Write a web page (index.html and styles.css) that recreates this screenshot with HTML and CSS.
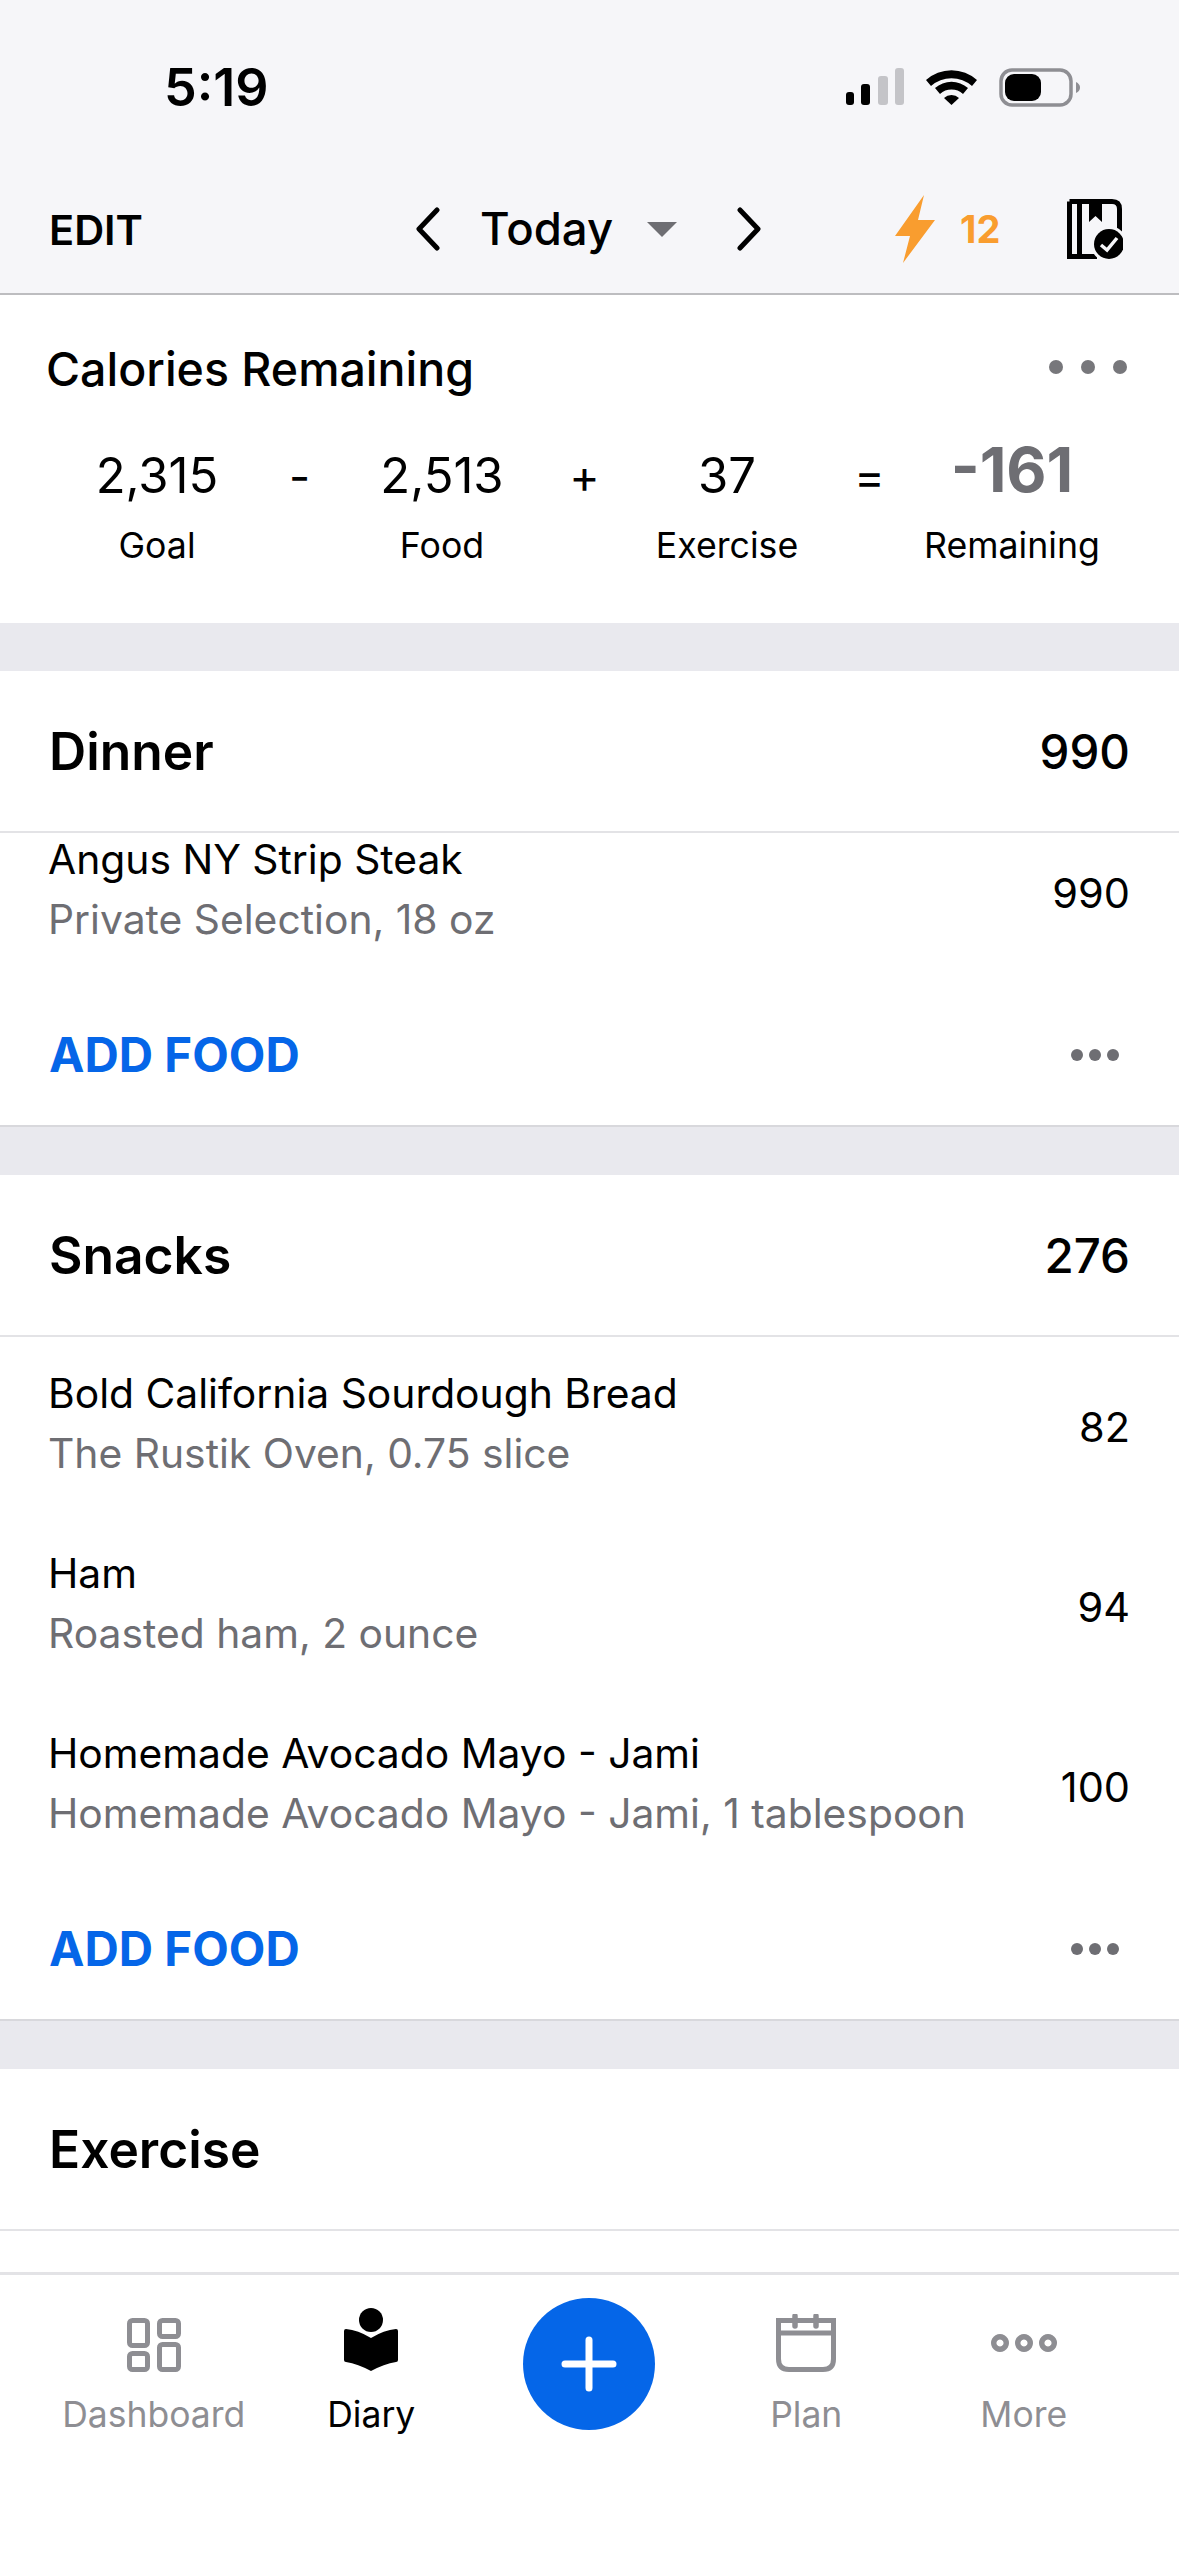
FILE: index.html
```html
<!DOCTYPE html>
<html lang="en">
<head>
    <meta charset="UTF-8">
    <meta name="viewport" content="width=device-width, initial-scale=1.0">
    <title>Diary</title>
    <link rel="stylesheet" href="styles.css">
</head>
<body>
    <div class="app">
        <header class="top">
            <div class="status-bar">
                <span class="time">5:19</span>
                <div class="status-icons">
                    <svg class="signal" width="58" height="37" viewBox="0 0 58 37">
                        <rect x="0" y="24" width="8" height="13" rx="3" fill="#000"/>
                        <rect x="15" y="16" width="9" height="21" rx="3" fill="#000"/>
                        <rect x="32" y="8" width="10" height="29" rx="3" fill="#c4c4c8"/>
                        <rect x="49" y="0" width="9" height="37" rx="3" fill="#c4c4c8"/>
                    </svg>
                    <svg class="wifi" width="51" height="37" viewBox="0 0 51 37">
                        <path d="M0 12 A38 38 0 0 1 51 12 L46 18 A31 31 0 0 0 5 18 Z"/>
                        <path d="M9 22 A25 25 0 0 1 42 22 L37 28 A17 17 0 0 0 14 28 Z" transform="translate(0 -2)"/>
                        <path d="M18 30 A11 11 0 0 1 33 30 L25.5 37 Z"/>
                    </svg>
                    <svg class="battery" width="82" height="39" viewBox="0 0 82 39">
                        <rect x="2" y="2" width="70" height="35" rx="11" fill="none" stroke="#8e8e93" stroke-width="3.5"/>
                        <rect x="6" y="6" width="36" height="27" rx="9" fill="#000"/>
                        <path d="M77 14 Q81 16 81 19.5 Q81 23 77 25 Z" fill="#8e8e93"/>
                    </svg>
                </div>
            </div>
            <nav class="nav-bar">
                <span class="edit">EDIT</span>
                <div class="date-nav">
                    <svg class="chevron" width="26" height="44" viewBox="0 0 26 44"><path d="M21 3 L3 22 L21 41"/></svg>
                    <span class="today">Today</span>
                    <span class="caret"></span>
                    <svg class="chevron" width="26" height="44" viewBox="0 0 26 44"><path d="M3 3 L21 22 L3 41"/></svg>
                </div>
                <div class="nav-right">
                    <svg class="bolt" width="40" height="68" viewBox="0 0 40 68"><path d="M29 0 L0 41 L15 41 L8 68 L40 25 L23 25 Z"/></svg>
                    <span class="streak">12</span>
                    <svg class="plan-icon" width="56" height="60" viewBox="0 0 56 60">
                        <path d="M2.5 2.5 H45 Q52.5 2.5 52.5 10 V36 M2.5 2.5 V57.5 H30" fill="none" stroke="#000" stroke-width="5"/>
                        <rect x="10" y="2" width="5" height="56"/>
                        <path d="M22 2 H35 V23 L28.5 17 L22 23 Z"/>
                        <circle cx="42" cy="45" r="18" fill="#f6f6f9"/>
                        <circle cx="42" cy="45" r="15"/>
                        <path d="M34 46 L40 51 L50 39" fill="none" stroke="#f6f6f9" stroke-width="3.5"/>
                    </svg>
                </div>
            </nav>
        </header>

        <main class="scroll">
            <section class="summary">
                <div class="summary-head">
                    <h2>Calories Remaining</h2>
                    <div class="dots dots-lg"><i></i><i></i><i></i></div>
                </div>
                <div class="sum-grid">
                    <div class="sum-cell"><b>2,315</b><span>Goal</span></div>
                    <div class="sum-op">-</div>
                    <div class="sum-cell"><b>2,513</b><span>Food</span></div>
                    <div class="sum-op">+</div>
                    <div class="sum-cell"><b>37</b><span>Exercise</span></div>
                    <div class="sum-op">=</div>
                    <div class="sum-cell sum-total"><b>-161</b><span>Remaining</span></div>
                </div>
            </section>

            <section class="meal">
                <div class="meal-head"><h3>Dinner</h3><span class="meal-cal">990</span></div>
                <div class="food food-scrolled">
                    <div class="food-text"><p class="food-name">Angus NY Strip Steak</p><p class="food-sub">Private Selection, 18 oz</p></div>
                    <span class="food-cal">990</span>
                </div>
                <div class="meal-foot"><span class="add-food">ADD FOOD</span><div class="dots"><i></i><i></i><i></i></div></div>
            </section>

            <section class="meal">
                <div class="meal-head"><h3>Snacks</h3><span class="meal-cal">276</span></div>
                <div class="food">
                    <div class="food-text"><p class="food-name">Bold California Sourdough Bread</p><p class="food-sub">The Rustik Oven, 0.75 slice</p></div>
                    <span class="food-cal">82</span>
                </div>
                <div class="food">
                    <div class="food-text"><p class="food-name">Ham</p><p class="food-sub">Roasted ham, 2 ounce</p></div>
                    <span class="food-cal">94</span>
                </div>
                <div class="food">
                    <div class="food-text"><p class="food-name">Homemade Avocado Mayo - Jami</p><p class="food-sub">Homemade Avocado Mayo - Jami, 1 tablespoon</p></div>
                    <span class="food-cal">100</span>
                </div>
                <div class="meal-foot"><span class="add-food">ADD FOOD</span><div class="dots"><i></i><i></i><i></i></div></div>
            </section>

            <section class="meal">
                <div class="meal-head"><h3>Exercise</h3></div>
                <div class="food food-clipped">
                    <p class="food-name">Running on treadmill</p>
                </div>
            </section>
        </main>

        <footer class="tabs">
            <div class="tab">
                <svg width="54" height="54" viewBox="0 0 54 54" fill="none" stroke="#8e8e93" stroke-width="5">
                    <rect x="2.5" y="2.5" width="18" height="25" rx="3"/>
                    <rect x="2.5" y="35.5" width="18" height="16" rx="3"/>
                    <rect x="32.5" y="2.5" width="19" height="16" rx="3"/>
                    <rect x="32.5" y="26.5" width="19" height="25" rx="3"/>
                </svg>
                <span>Dashboard</span>
            </div>
            <div class="tab tab-active">
                <svg width="54" height="64" viewBox="0 0 54 64">
                    <circle cx="27" cy="12" r="12"/>
                    <path d="M2 21 Q14 22 27 30 Q40 22 52 21 Q54 21 54 23 V52 Q54 54 52 54 Q40 56 27 63 Q14 56 2 54 Q0 54 0 52 V23 Q0 21 2 21 Z"/>
                </svg>
                <span>Diary</span>
            </div>
            <div class="tab tab-add">
                <div class="add-btn">
                    <svg width="56" height="56" viewBox="0 0 56 56" stroke="#fff" stroke-width="7" stroke-linecap="round"><path d="M28 4 V52 M4 28 H52"/></svg>
                </div>
            </div>
            <div class="tab">
                <svg width="60" height="58" viewBox="0 0 60 58" fill="none" stroke="#8e8e93" stroke-width="5">
                    <path d="M2.5 6.5 H57.5 V45 Q57.5 55.5 47 55.5 H13 Q2.5 55.5 2.5 45 Z"/>
                    <path d="M2.5 19 H57.5"/>
                    <path d="M19 2 V12 M40 2 V12" stroke-width="5.5" stroke-linecap="round"/>
                </svg>
                <span>Plan</span>
            </div>
            <div class="tab">
                <svg class="more-icon" width="66" height="58" viewBox="0 0 66 58">
                    <path fill-rule="evenodd" d="M9 20 a9 9 0 1 0 .01 0 Z M9 25.5 a3.5 3.5 0 1 1 -.01 0 Z M33 20 a9 9 0 1 0 .01 0 Z M33 25.5 a3.5 3.5 0 1 1 -.01 0 Z M57 20 a9 9 0 1 0 .01 0 Z M57 25.5 a3.5 3.5 0 1 1 -.01 0 Z"/>
                </svg>
                <span>More</span>
            </div>
        </footer>
    </div>
</body>
</html>
```

FILE: styles.css
```css
* {
    box-sizing: border-box;
}
html, body {
    margin: 0;
    height: 100%;
    background-color: #fff;
}
body {
    font-family: Inter, "Noto Sans", sans-serif;
    color: #000;
}
h2, h3, p {
    margin: 0;
    font-weight: normal;
}
.app {
    display: flex;
    flex-direction: column;
    height: 2556px;
    overflow: hidden;
}

/* top */
.top {
    height: 295px;
    flex: none;
    background-color: #f6f6f9;
    border-bottom: 2px solid #bdbdc0;
}
.status-bar {
    height: 174px;
    display: flex;
    justify-content: space-between;
    padding: 56px 98px 0 164px;
}
.time {
    font-size: 52px;
    font-weight: 600;
    line-height: 64px;
}
.status-icons {
    display: flex;
    align-items: flex-start;
    gap: 22px;
    padding-top: 12px;
}
.nav-bar {
    display: flex;
    align-items: center;
    height: 110px;
    padding: 0 56px 0 49px;
}
.edit {
    width: 367px;
    font-size: 41.5px;
    font-weight: 600;
    margin-top: 2px;
}
.date-nav {
    display: flex;
    align-items: center;
    width: 348px;
}
.chevron {
    flex: none;
    fill: none;
    stroke: #000;
    stroke-width: 5;
    stroke-linecap: round;
    stroke-linejoin: round;
}
.today {
    font-size: 45.5px;
    font-weight: 500;
    margin: -2px 0 0 38px;
}
.caret {
    width: 0;
    height: 0;
    margin: 0 60px 0 34px;
    border-left: 15px solid transparent;
    border-right: 15px solid transparent;
    border-top: 15px solid #6e6e73;
}
.nav-right {
    display: flex;
    align-items: center;
    flex: 1;
    padding-left: 131px;
}
.bolt {
    fill: #f99d2f;
    flex: none;
}
.streak {
    color: #f99d2f;
    font-size: 38px;
    font-weight: 700;
    margin-left: 25px;
    width: 107px;
}
.plan-icon {
    flex: none;
}

/* scroll area */
.scroll {
    flex: 1;
    min-height: 0;
    overflow: hidden;
    background-color: #e9e9ee;
}
.summary {
    height: 328px;
    background-color: #fff;
    padding: 44px 46px 0;
}
.summary-head {
    display: flex;
    justify-content: space-between;
    align-items: center;
    height: 60px;
}
.summary-head h2 {
    font-size: 46.5px;
    font-weight: 500;
}
.dots {
    display: flex;
    gap: 6px;
    margin-right: 11px;
    margin-top: 2px;
}
.dots i {
    width: 12px;
    height: 12px;
    border-radius: 50%;
    background-color: #6e6e73;
}
.dots-lg {
    gap: 18px;
    margin-right: 6px;
    margin-top: -5px;
}
.dots-lg i {
    width: 14px;
    height: 14px;
    background-color: #77777b;
}
.sum-grid {
    display: grid;
    grid-template-columns: repeat(3, 190px 95px) 190px;
    margin: 49px 0 0 16px;
}
.sum-cell {
    display: flex;
    flex-direction: column;
    align-items: center;
}
.sum-cell b {
    font-size: 49px;
    font-weight: 400;
    line-height: 56px;
    height: 56px;
}
.sum-cell span {
    font-size: 35.7px;
    line-height: 46px;
    margin-top: 18px;
}
.sum-total b {
    color: #6e6e73;
    font-size: 62px;
    font-weight: 700;
    margin-top: -6px;
    margin-bottom: 6px;
}
.sum-op {
    font-size: 46px;
    line-height: 56px;
    text-align: center;
}

/* meals */
.meal {
    background-color: #fff;
    margin-top: 48px;
    border-bottom: 2px solid #d8d8dc;
}
.meal-head {
    position: relative;
    display: flex;
    justify-content: space-between;
    align-items: center;
    height: 162px;
    padding: 0 49px;
    background-color: #fff;
    border-bottom: 2px solid #e3e3e6;
}
.meal-head h3 {
    font-size: 51.5px;
    font-weight: 600;
}
.meal-cal {
    font-size: 47.5px;
    font-weight: 500;
}
.food {
    display: flex;
    justify-content: space-between;
    align-items: center;
    height: 180px;
    padding: 0 49px 0 48px;
}
.food-scrolled {
    margin-top: -30px;
}
.food-clipped {
    align-items: flex-start;
    padding-top: 27px;
}
.food-text {
    padding-bottom: 8px;
}
.food-name {
    font-size: 40.8px;
    line-height: 60px;
}
.food-sub {
    font-size: 40.8px;
    line-height: 60px;
    color: #6e6e73;
}
.food-cal {
    font-size: 41.5px;
}
.meal-foot {
    display: flex;
    justify-content: space-between;
    align-items: center;
    height: 142px;
    padding: 0 49px;
}
.add-food {
    color: #0566e8;
    font-size: 47.5px;
    font-weight: 700;
}

/* tabs */
.tabs {
    position: relative;
    flex: none;
    height: 284px;
    display: grid;
    grid-template-columns: repeat(5, 217.5px);
    padding: 0 0 0 45px;
    background-color: #fff;
    border-top: 3px solid #e3e3e6;
}
.tab {
    display: flex;
    flex-direction: column;
    align-items: center;
    justify-content: flex-end;
    height: 163px;
    fill: #8e8e93;
    color: #8e8e93;
}
.tab span {
    font-size: 35.5px;
    line-height: 46px;
    margin-top: 20px;
}
.tab-active {
    fill: #000;
    color: #000;
}
.tab-add {
    justify-content: flex-start;
}
.add-btn {
    width: 132px;
    height: 132px;
    margin-top: 23px;
    border-radius: 50%;
    background-color: #0566e8;
    display: flex;
    align-items: center;
    justify-content: center;
}
```
